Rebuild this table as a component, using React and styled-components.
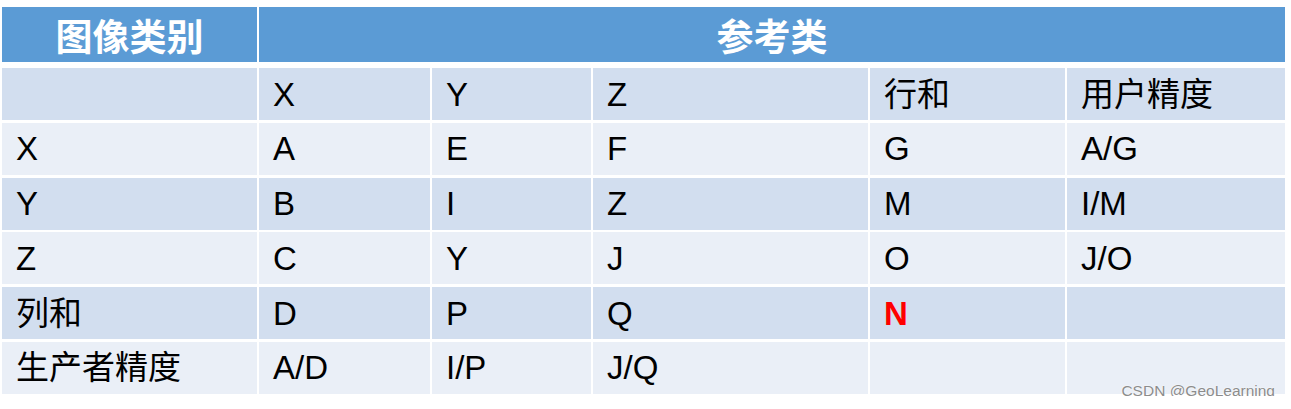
import React from 'react'
import styled, { createGlobalStyle } from 'styled-components'

const GlobalStyle = createGlobalStyle`
  html, body {
    margin: 0;
    padding: 0;
    background: #ffffff;
  }
  body {
    font-family: "Liberation Sans", "Noto Sans CJK SC", Arial, sans-serif;
  }
`

const Page = styled.div`
  position: relative;
  width: 1291px;
  height: 396px;
  padding: 7px 0 0 2px;
  box-sizing: border-box;
  overflow: hidden;
`

const Table = styled.div`
  display: flex;
  flex-direction: column;
  gap: 6px;
  width: 1283px;
`

const HeaderRow = styled.div`
  display: grid;
  grid-template-columns: 255px 1fr;
  column-gap: 2px;
  height: 55px;
`

const HeaderCell = styled.div`
  background: #5b9bd5;
  color: #ffffff;
  display: flex;
  align-items: center;
  justify-content: center;
  font-family: "Noto Sans CJK SC", sans-serif;
  font-weight: 700;
  font-size: 37px;
  line-height: 1;
  padding-top: 2px;
`

const Body = styled.div`
  display: grid;
  grid-template-columns: 255px 171px 159px 275px 195px 218px;
  grid-auto-rows: 52px;
  column-gap: 2px;
  row-gap: 2.75px;
`

const Cell = styled.div`
  background: ${p => (p.$band ? '#d2deef' : '#eaeff7')};
  display: flex;
  align-items: center;
  padding-left: 14px;
  font-size: 33px;
  line-height: 1;
  color: ${p => (p.$alert ? '#ff0000' : '#000000')};
  font-weight: ${p => (p.$alert ? 700 : 400)};
  white-space: nowrap;
`

const Watermark = styled.div`
  position: absolute;
  right: 16px;
  bottom: -2px;
  font-family: "Liberation Sans", Arial, sans-serif;
  font-size: 15.5px;
  line-height: 1;
  color: #8c8c8c;
  text-shadow: 0 0 1px #ffffff, 0 0 2px #ffffff;
`

const rows = [
  ['', 'X', 'Y', 'Z', '行和', '用户精度'],
  ['X', 'A', 'E', 'F', 'G', 'A/G'],
  ['Y', 'B', 'I', 'Z', 'M', 'I/M'],
  ['Z', 'C', 'Y', 'J', 'O', 'J/O'],
  ['列和', 'D', 'P', 'Q', 'N', ''],
  ['生产者精度', 'A/D', 'I/P', 'J/Q', '', ''],
]

export default function App() {
  return (
    <>
      <GlobalStyle />
      <Page>
        <Table>
          <HeaderRow>
            <HeaderCell>图像类别</HeaderCell>
            <HeaderCell>参考类</HeaderCell>
          </HeaderRow>
          <Body>
            {rows.map((row, r) =>
              row.map((text, c) => (
                <Cell key={r + '-' + c} $band={r % 2 === 0} $alert={r === 4 && c === 4}>
                  {text}
                </Cell>
              ))
            )}
          </Body>
        </Table>
        <Watermark>CSDN @GeoLearning</Watermark>
      </Page>
    </>
  )
}
